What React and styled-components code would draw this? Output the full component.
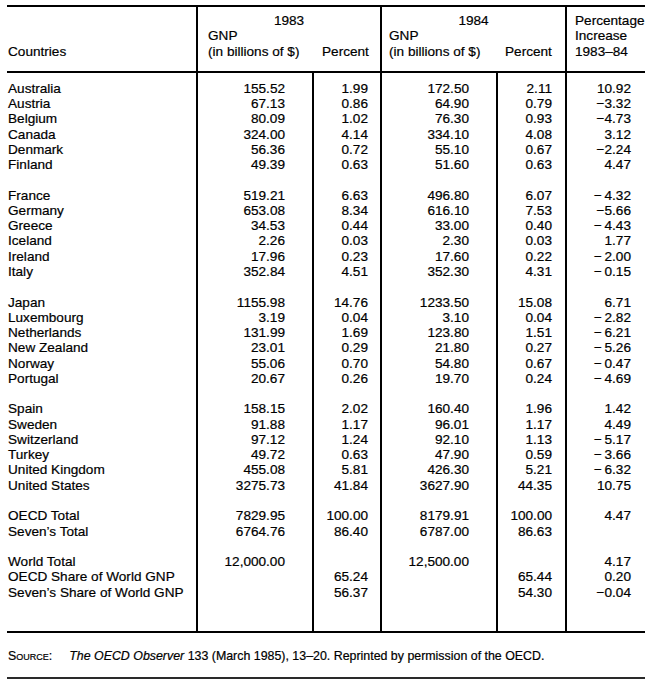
import React from "react";
import styled, { createGlobalStyle } from "styled-components";

const Global = createGlobalStyle`
  html, body { margin: 0; padding: 0; background: #fff; }
  body {
    font-family: "Liberation Sans", Arial, sans-serif;
    color: #000;
    -webkit-text-stroke: 0.2px #000;
  }
`;

const Page = styled.div`
  width: 655px;
  padding: 5px 10px 0 7px;
  box-sizing: border-box;
`;

const Table = styled.table`
  width: 638px;
  table-layout: fixed;
  border-collapse: separate;
  border-spacing: 0;
  border-top: 2px solid #000;
  border-bottom: 2px solid #000;
  font-size: 13.6px;
  line-height: 15.27px;
  color: #000;
`;

const HeadCell = styled.th`
  font-weight: normal;
  text-align: ${(p) => p.$align || "left"};
  vertical-align: ${(p) => p.$valign || "bottom"};
  padding: ${(p) => (p.$top ? "6px" : "0")} 0 ${(p) => (p.$bottom ? "12px" : "0")}
    ${(p) => p.$pl || 0}px;
  border-left: ${(p) => (p.$line ? "2px solid #000" : "none")};
  border-bottom: ${(p) => (p.$bottom ? "2px solid #000" : "none")};
  white-space: nowrap;
`;

const Cell = styled.td`
  padding: 0 ${(p) => p.$pr || 0}px 0 ${(p) => p.$pl || 0}px;
  text-align: ${(p) => (p.$num ? "right" : "left")};
  border-left: ${(p) => (p.$line ? "2px solid #000" : "none")};
  white-space: nowrap;
  height: 15.27px;
`;

const Row = styled.tr`
  & > td {
    padding-top: ${(p) => (p.$first ? "8px" : "0")};
    padding-bottom: ${(p) => (p.$last ? "31.4px" : "0")};
  }
`;

const Footer = styled.div`
  width: 638px;
  padding: 16px 0 13px 1px;
  border-bottom: 2px solid #2a2a2a;
  font-size: 12.4px;
  line-height: 15px;
  display: flex;
  gap: 17px;
  box-sizing: border-box;
`;

const SourceLabel = styled.span`
  font-variant: small-caps;
`;

const Title = styled.i`
  font-style: italic;
`;

const cols = [
  { w: 189, pl: 1, pr: 0, line: false, num: false },
  { w: 116, pl: 0, pr: 27, line: true, num: true },
  { w: 68, pl: 0, pr: 12, line: true, num: true },
  { w: 116, pl: 0, pr: 27, line: true, num: true },
  { w: 69, pl: 0, pr: 13, line: true, num: true },
  { w: 80, pl: 0, pr: 14, line: true, num: true },
];

const M = "\u2212";
const MS = "\u2212\u2009";

const groups = [
  [
    ["Australia", "155.52", "1.99", "172.50", "2.11", "10.92"],
    ["Austria", "67.13", "0.86", "64.90", "0.79", M + "3.32"],
    ["Belgium", "80.09", "1.02", "76.30", "0.93", M + "4.73"],
    ["Canada", "324.00", "4.14", "334.10", "4.08", "3.12"],
    ["Denmark", "56.36", "0.72", "55.10", "0.67", M + "2.24"],
    ["Finland", "49.39", "0.63", "51.60", "0.63", "4.47"],
  ],
  [
    ["France", "519.21", "6.63", "496.80", "6.07", MS + "4.32"],
    ["Germany", "653.08", "8.34", "616.10", "7.53", M + "5.66"],
    ["Greece", "34.53", "0.44", "33.00", "0.40", MS + "4.43"],
    ["Iceland", "2.26", "0.03", "2.30", "0.03", "1.77"],
    ["Ireland", "17.96", "0.23", "17.60", "0.22", MS + "2.00"],
    ["Italy", "352.84", "4.51", "352.30", "4.31", MS + "0.15"],
  ],
  [
    ["Japan", "1155.98", "14.76", "1233.50", "15.08", "6.71"],
    ["Luxembourg", "3.19", "0.04", "3.10", "0.04", MS + "2.82"],
    ["Netherlands", "131.99", "1.69", "123.80", "1.51", MS + "6.21"],
    ["New Zealand", "23.01", "0.29", "21.80", "0.27", MS + "5.26"],
    ["Norway", "55.06", "0.70", "54.80", "0.67", MS + "0.47"],
    ["Portugal", "20.67", "0.26", "19.70", "0.24", MS + "4.69"],
  ],
  [
    ["Spain", "158.15", "2.02", "160.40", "1.96", "1.42"],
    ["Sweden", "91.88", "1.17", "96.01", "1.17", "4.49"],
    ["Switzerland", "97.12", "1.24", "92.10", "1.13", MS + "5.17"],
    ["Turkey", "49.72", "0.63", "47.90", "0.59", MS + "3.66"],
    ["United Kingdom", "455.08", "5.81", "426.30", "5.21", MS + "6.32"],
    ["United States", "3275.73", "41.84", "3627.90", "44.35", "10.75"],
  ],
  [
    ["OECD Total", "7829.95", "100.00", "8179.91", "100.00", "4.47"],
    ["Seven\u2019s Total", "6764.76", "86.40", "6787.00", "86.63", ""],
  ],
  [
    ["World Total", "12,000.00", "", "12,500.00", "", "4.17"],
    ["OECD Share of World GNP", "", "65.24", "", "65.44", "0.20"],
    ["Seven\u2019s Share of World GNP", "", "56.37", "", "54.30", M + "0.04"],
  ],
];

function DataRow({ values, first, last }) {
  return (
    <Row $first={first} $last={last}>
      {values.map((v, i) => (
        <Cell key={i} $pl={cols[i].pl} $pr={cols[i].pr} $line={cols[i].line} $num={cols[i].num}>
          {v || "\u00a0"}
        </Cell>
      ))}
    </Row>
  );
}

export default function App() {
  const rows = [];
  groups.forEach((g, gi) => {
    if (gi > 0) rows.push({ key: "s" + gi, values: ["", "", "", "", "", ""] });
    g.forEach((r) => rows.push({ key: r[0], values: r }));
  });
  return (
    <Page>
      <Global />
      <Table>
        <colgroup>
          {cols.map((c, i) => (
            <col key={i} style={{ width: c.w }} />
          ))}
        </colgroup>
        <thead>
          <tr>
            <HeadCell rowSpan={2} $pl={1} $bottom>
              Countries
            </HeadCell>
            <HeadCell colSpan={2} $align="center" $valign="top" $top $line>
              1983
            </HeadCell>
            <HeadCell colSpan={2} $align="center" $valign="top" $top $line>
              1984
            </HeadCell>
            <HeadCell rowSpan={2} $valign="top" $top $bottom $line $pl={8}>
              Percentage
              <br />
              Increase
              <br />
              1983–84
            </HeadCell>
          </tr>
          <tr>
            <HeadCell $line $bottom $pl={10}>
              GNP
              <br />
              (in billions of $)
            </HeadCell>
            <HeadCell $bottom $pl={10}>
              Percent
            </HeadCell>
            <HeadCell $line $bottom $pl={7}>
              GNP
              <br />
              (in billions of $)
            </HeadCell>
            <HeadCell $bottom $pl={9}>
              Percent
            </HeadCell>
          </tr>
        </thead>
        <tbody>
          {rows.map((r, i) => (
            <DataRow key={r.key} values={r.values} first={i === 0} last={i === rows.length - 1} />
          ))}
        </tbody>
      </Table>
      <Footer>
        <SourceLabel>Source:</SourceLabel>
        <span>
          <Title>The OECD Observer</Title> 133 (March 1985), 13–20. Reprinted by permission of the OECD.
        </span>
      </Footer>
    </Page>
  );
}
